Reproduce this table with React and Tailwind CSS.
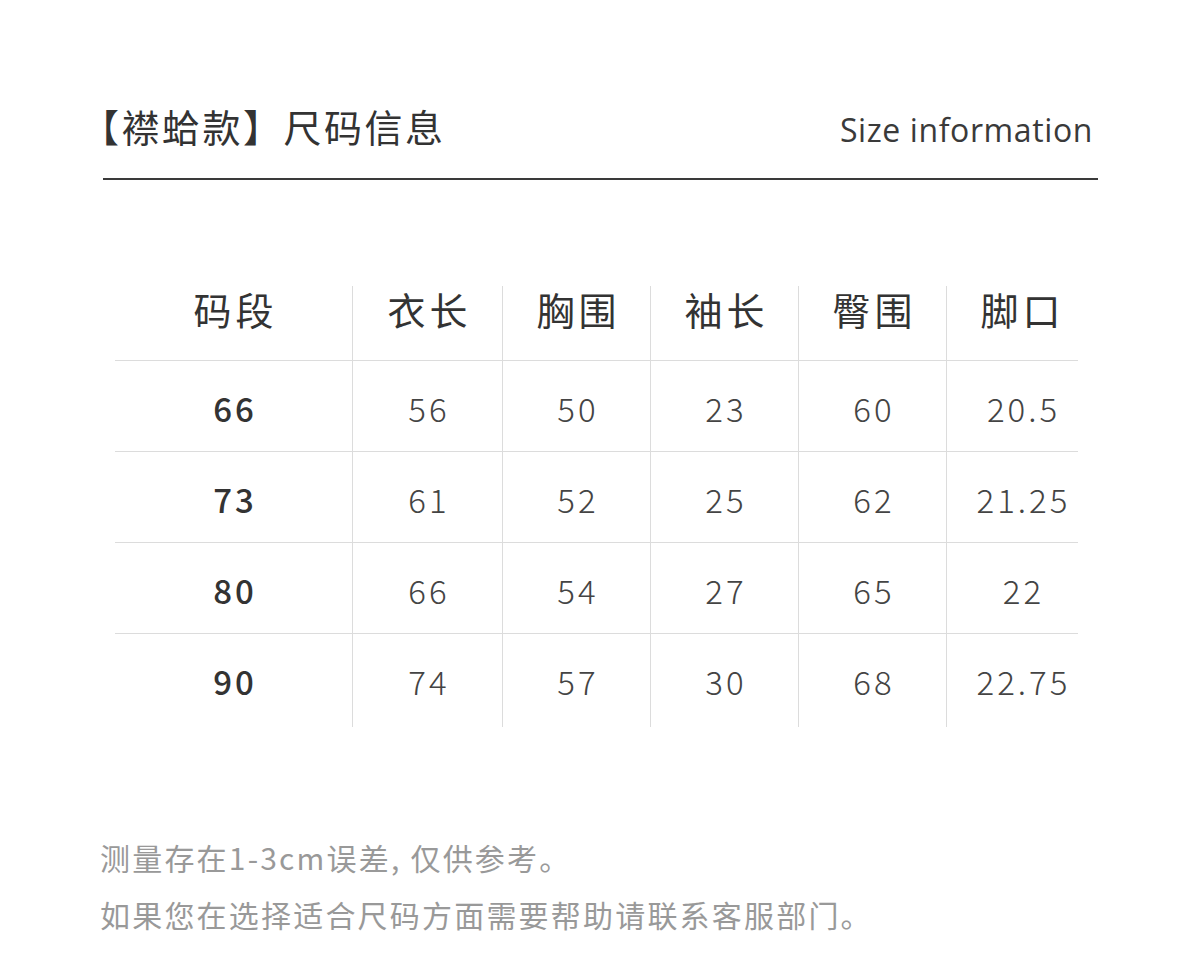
import React from "react";

const headers = ["码段", "衣长", "胸围", "袖长", "臀围", "脚口"];

const rows = [
  ["66", "56", "50", "23", "60", "20.5"],
  ["73", "61", "52", "25", "62", "21.25"],
  ["80", "66", "54", "27", "65", "22"],
  ["90", "74", "57", "30", "68", "22.75"],
];

const cols = "grid grid-cols-[237px_150px_148px_148px_148px_132px]";
const cjk = { fontFamily: '"Noto Sans CJK SC", "Noto Sans", sans-serif' };

const App = () => {
  return (
    <div className="w-[1200px] h-[960px] bg-white text-[#333]" style={cjk}>
      {/* title */}
      <div className="pl-[103px] pr-[102px] pt-[96px]">
        <div className="flex justify-between items-end pb-[22px] border-b-2 border-[#3a3a3a]">
          <h1 className="text-[38px] leading-[60px] font-normal tracking-[2.5px] -ml-[22px]">【襟蛤款】尺码信息</h1>
          <p
            className="text-[32px] leading-[40px] tracking-[0.6px] text-[#3a3a3a] mb-[6px] mr-[5px]"
            style={{ fontFamily: '"Open Sans", sans-serif' }}
          >
            Size information
          </p>
        </div>
      </div>

      {/* table */}
      <div className="pl-[115px] pt-[107px]">
        <div className="w-fit">
          <div className={cols + " h-[73px]"}>
            {headers.map((h, i) => (
              <div
                key={h}
                className={
                  "flex justify-center -mt-[1px] text-[38px] leading-[46px] tracking-[4px] text-[#333] " +
                  (i > 0 ? "border-l border-[#dcdcdc] " : "") +
                  (i === 5 ? "pl-[20px]" : "pl-[4px]")
                }
              >
                {h}
              </div>
            ))}
          </div>
          {rows.map((r, ri) => (
            <div key={ri} className={cols + " border-t border-[#dcdcdc] " + (ri === 3 ? "h-[94px]" : "h-[91px]")}>
              {r.map((v, i) => (
                <div
                  key={i}
                  className={
                    "flex justify-center pt-[29px] text-[33px] leading-[36px] tracking-[3px] " +
                    (i > 0 ? "border-l border-[#dcdcdc] font-light text-[#444] " : "font-medium text-[#333] ") +
                    (i === 5 ? "pl-[22px]" : "pl-[3px]")
                  }
                >
                  {v}
                </div>
              ))}
            </div>
          ))}
        </div>
      </div>

      {/* notes */}
      <div className="pl-[100px] pt-[102px] text-[30px] leading-[57px] tracking-[2.2px] text-[#999]">
        <p>测量存在1-3cm误差, 仅供参考。</p>
        <p>如果您在选择适合尺码方面需要帮助请联系客服部门。</p>
      </div>
    </div>
  );
};

export default App;
